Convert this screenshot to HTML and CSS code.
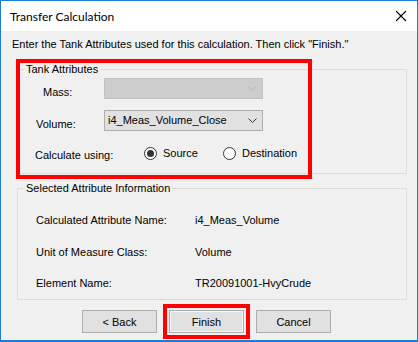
FILE: index.html
```html
<!DOCTYPE html>
<html>
<head>
<meta charset="utf-8">
<title>Transfer Calculation</title>
<link rel="stylesheet" href="styles.css">
</head>
<body>
<div class="window">
  <div class="titlebar">
    <span class="title">Transfer Calculation</span>
    <svg class="close" width="12" height="12" viewBox="0 0 12 12"><path d="M1 1 L11 11 M11 1 L1 11" stroke="#000" stroke-width="1.1" fill="none"/></svg>
  </div>
  <div class="content">
    <div class="instruction">Enter the Tank Attributes used for this calculation. Then click "Finish."</div>
    <fieldset class="group group-tank">
      <legend>Tank Attributes</legend>
      <div class="row">
        <span class="label label-mass">Mass:</span>
        <div class="combo combo-disabled">
          <span class="combo-text"></span>
          <svg class="chev" width="9" height="5" viewBox="0 0 9 5"><path d="M0.5 0.5 L4.5 4.5 L8.5 0.5" stroke="#b9b9b9" fill="none"/></svg>
        </div>
      </div>
      <div class="row">
        <span class="label">Volume:</span>
        <div class="combo">
          <span class="combo-text">i4_Meas_Volume_Close</span>
          <svg class="chev" width="9" height="5" viewBox="0 0 9 5"><path d="M0.5 0.5 L4.5 4.5 L8.5 0.5" stroke="#333" fill="none"/></svg>
        </div>
      </div>
      <div class="row row-radio">
        <span class="label label-calc">Calculate using:</span>
        <div class="radios">
          <span class="radio-item radio-first"><span class="radio checked"><span class="dot"></span></span><span class="radio-text">Source</span></span>
          <span class="radio-item"><span class="radio"></span><span class="radio-text">Destination</span></span>
        </div>
      </div>
    </fieldset>
    <fieldset class="group group-info">
      <legend>Selected Attribute Information</legend>
      <div class="info-row"><span class="info-label">Calculated Attribute Name:</span><span>i4_Meas_Volume</span></div>
      <div class="info-row"><span class="info-label">Unit of Measure Class:</span><span>Volume</span></div>
      <div class="info-row"><span class="info-label">Element Name:</span><span>TR20091001-HvyCrude</span></div>
    </fieldset>
    <div class="buttons">
      <button class="btn">&lt; Back</button>
      <button class="btn btn-default highlighted">Finish</button>
      <button class="btn">Cancel</button>
    </div>
  </div>
  <div class="highlight-box"></div>
</div>
</body>
</html>
```
FILE: styles.css
```css
html, body {
  margin: 0;
  padding: 0;
}
body {
  font-family: "Liberation Sans", Arial, sans-serif;
  font-size: 11px;
  line-height: 13px;
  color: #000;
  background: #f0f0f0;
}
.window {
  position: relative;
  width: 418px;
  height: 342px;
  box-sizing: border-box;
  border: 1px solid #1c7ed6;
  border-bottom-width: 2px;
  background: #f0f0f0;
  display: flex;
  flex-direction: column;
}
.titlebar {
  height: 30px;
  background: #fff;
  display: flex;
  align-items: center;
  justify-content: space-between;
  padding: 0 10px 0 9px;
  flex: none;
}
.title {
  font-family: Lato, "Liberation Sans", sans-serif;
  font-size: 12px;
  color: #000;
}
.close {
  display: block;
}
.content {
  flex: 1;
  padding: 7px 10px 0 11px;
}
.instruction {
  height: 13px;
  white-space: nowrap;
}
.group {
  margin: 12px 0 0 5px;
  padding: 0;
  width: 390px;
  box-sizing: border-box;
  border: 1px solid #dcdcdc;
  min-width: 0;
}
.group legend {
  margin-left: 6px;
  padding: 0 2px;
  line-height: 13px;
}
.group-tank {
  height: 111px;
  padding-top: 2px;
}
.row {
  display: flex;
  height: 21px;
  margin-bottom: 11px;
}
.label {
  width: 68px;
  padding-left: 18px;
  padding-top: 8px;
  flex: none;
  white-space: nowrap;
}
.label-mass {
  padding-left: 25px;
  width: 61px;
}
.combo {
  width: 159px;
  height: 21px;
  box-sizing: border-box;
  border: 1px solid #adadad;
  background: #e1e1e1;
  display: flex;
  align-items: center;
  justify-content: space-between;
  padding: 0 5px 0 3px;
}
.combo-disabled {
  background: #cccccc;
  border-color: #c2c2c2;
}
.chev {
  display: block;
}
.row-radio {
  margin-top: 1px;
  margin-bottom: 0;
}
.label-calc {
  padding-top: 7px;
  padding-left: 17px;
  width: 69px;
}
.radios {
  display: flex;
  align-items: center;
  padding-left: 40px;
  padding-top: 2px;
}
.radio-item {
  display: flex;
  align-items: center;
  white-space: nowrap;
}
.radio-first {
  width: 79px;
}
.radio {
  width: 13px;
  height: 13px;
  box-sizing: border-box;
  border: 1px solid #333;
  border-radius: 50%;
  background: #fff;
  display: flex;
  align-items: center;
  justify-content: center;
  flex: none;
}
.dot {
  width: 7px;
  height: 7px;
  border-radius: 50%;
  background: #333;
}
.radio-text {
  margin-left: 6px;
}
.group-info {
  margin-top: 8px;
  height: 118px;
  padding-top: 19px;
}
.info-row {
  display: flex;
  height: 13px;
  margin-bottom: 18.5px;
  padding-left: 18px;
  white-space: nowrap;
}
.info-label {
  width: 159px;
  flex: none;
}
.buttons {
  display: flex;
  margin: 10px 0 0 70px;
}
.btn {
  font-family: "Liberation Sans", Arial, sans-serif;
  font-size: 11px;
  width: 75px;
  height: 23px;
  box-sizing: border-box;
  border: 1px solid #adadad;
  background: #e1e1e1;
  color: #000;
  padding: 0;
  margin-right: 12px;
}
.btn-default {
  box-shadow: inset 0 0 0 1px #f5f5f5;
}
.highlighted {
  outline: 4px solid #ff0000;
  outline-offset: 2px;
}
.highlight-box {
  position: absolute;
  left: 15px;
  top: 58px;
  width: 296px;
  height: 120px;
  box-sizing: border-box;
  border: 4px solid #ff0000;
  pointer-events: none;
}
```
